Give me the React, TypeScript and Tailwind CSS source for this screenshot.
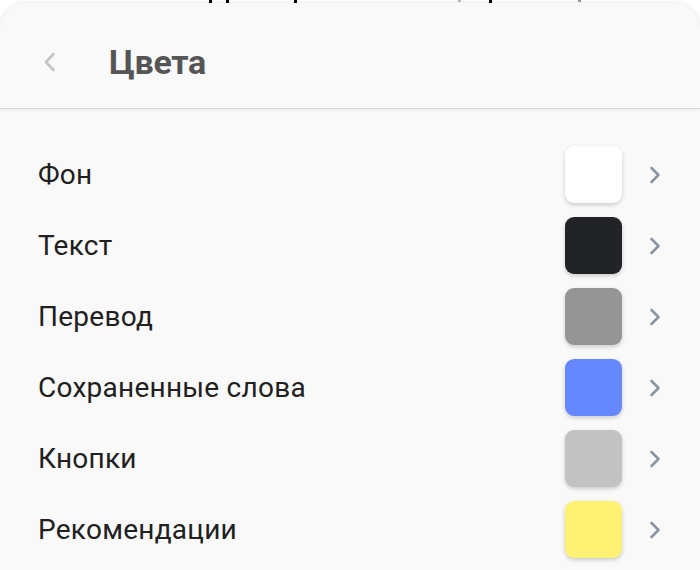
import React from "react";

const rows = [
  { label: "Фон", color: "bg-[#ffffff]" },
  { label: "Текст", color: "bg-[#212327]" },
  { label: "Перевод", color: "bg-[#959595]" },
  { label: "Сохраненные слова", color: "bg-[#6688ff]" },
  { label: "Кнопки", color: "bg-[#c2c2c2]" },
  { label: "Рекомендации", color: "bg-[#fff174]" },
];

function Chevron() {
  return (
    <svg width="14" height="20" viewBox="0 0 14 20" fill="none">
      <path d="M3.5 3 L10.5 10 L3.5 17" stroke="#8c95a3" strokeWidth="2.6" strokeLinecap="round" strokeLinejoin="round" />
    </svg>
  );
}

export default function App() {
  return (
    <div className="w-[700px] h-[570px] bg-white overflow-hidden flex flex-col" style={{ fontFamily: "Roboto, 'Noto Sans', sans-serif" }}>
      <div className="h-[3px] flex items-start shrink-0">
        <div className="w-[3px] h-[3px] bg-black ml-[209px]" />
        <div className="w-[3px] h-[3px] bg-black ml-[14px]" />
        <div className="w-[3px] h-[3px] bg-black ml-[65px]" />
        <div className="w-[3px] h-[2px] bg-[#bbbbbb] ml-[161px]" />
        <div className="w-[3px] h-[3px] bg-black ml-[28px]" />
        <div className="w-[3px] h-[2px] bg-[#999999] ml-[86px]" />
      </div>
      <div className="flex-1 bg-[#f9f9f9] rounded-t-[26px] shadow-[0_0_4px_rgba(0,0,0,0.12)] flex flex-col">
        <div className="h-[106px] pt-[13px] shrink-0 flex items-center border-b border-[#d9d9d9] shadow-[0_1px_2px_rgba(0,0,0,0.06)]">
          <div className="w-[109px] pl-[41px] flex items-center">
            <svg width="18" height="24" viewBox="0 0 18 24" fill="none">
              <path d="M12.5 4 L5 12 L12.5 20" stroke="#c4c4c4" strokeWidth="2.6" strokeLinecap="round" strokeLinejoin="round" />
            </svg>
          </div>
          <div className="text-[34px] font-bold text-[#555555] tracking-[-0.3px] leading-none">Цвета</div>
        </div>
        <div className="pt-[30px] flex flex-col">
          {rows.map((r) => (
            <div key={r.label} className="h-[71px] flex items-center pl-[38px] pr-[38px]">
              <div className="flex-1 text-[28px] tracking-[0.25px] text-[#202020]">{r.label}</div>
              <div className={`w-[57px] h-[57px] rounded-[9px] ${r.color} shadow-[0_2px_4px_rgba(0,0,0,0.18)]`} />
              <div className="ml-[26px] flex items-center">
                <Chevron />
              </div>
            </div>
          ))}
        </div>
      </div>
    </div>
  );
}
